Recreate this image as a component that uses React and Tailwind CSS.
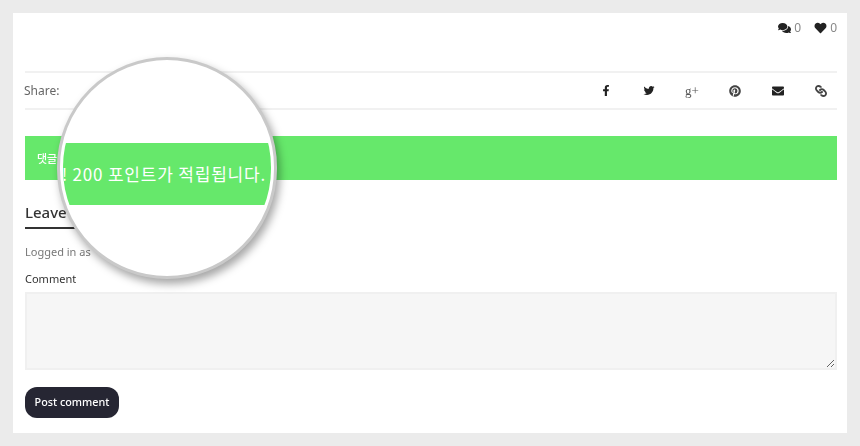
import { FaComments, FaHeart, FaFacebookF, FaTwitter, FaPinterest, FaEnvelope, FaLink } from "react-icons/fa";

const kr = { fontFamily: '"Noto Sans CJK KR", "Noto Sans", sans-serif' };

export default function App() {
  return (
    <div className="relative w-[860px] h-[446px] bg-[#ebebeb] overflow-hidden p-[13px]" style={{ fontFamily: '"Noto Sans", sans-serif' }}>
      <div className="w-[834px] h-[420px] bg-white pl-3 pr-[10px] flex flex-col blur-[0.4px]">
        <div className="h-[58px] flex justify-end items-start pt-[7px] text-[12px] leading-[15px] text-[#888]">
          <div className="flex items-center gap-[3px] mr-[13px]">
            <FaComments className="w-[13px] h-3 text-[#222]" />
            <span>0</span>
          </div>
          <div className="flex items-center gap-[3px]">
            <FaHeart className="w-[13px] h-3 text-[#222]" />
            <span>0</span>
          </div>
        </div>
        <div className="h-[39px] border-t-2 border-b-2 border-[#f1f1f1] flex items-center justify-between box-border">
          <span className="text-[12px] text-[#666] -ml-px">Share:</span>
          <div className="flex items-center gap-[29px] pr-[9px] text-[#222]">
            <FaFacebookF className="w-[14px] h-[11px]" />
            <FaTwitter className="w-[14px] h-[11px]" />
            <span className="w-[14px] h-[14px] flex items-center justify-center text-[13px] leading-[14px] text-[#555]" style={{ fontFamily: '"Liberation Serif", serif' }}>g+</span>
            <FaPinterest className="w-[14px] h-3 text-[#444]" />
            <FaEnvelope className="w-[14px] h-3" />
            <FaLink className="w-[14px] h-3 text-[#444] rotate-90" />
          </div>
        </div>
        <div className="mt-[26px] h-11 bg-[#66e86b] flex items-center pl-3 text-[11px] font-medium text-white" style={kr}>
          댓글
        </div>
        <div className="mt-[21px] self-start text-[15px] leading-[22px] font-medium text-[#333] pb-[4px] pr-7 border-b-2 border-[#333]">
          Leave
        </div>
        <div className="mt-[15px] text-[11px] leading-4 text-[#777]">Logged in as</div>
        <div className="mt-[11px] text-[11px] leading-4 text-[#333]">Comment</div>
        <textarea
          readOnly
          className="mt-[5px] w-full h-[78px] block bg-[#f6f6f6] border-2 border-[#f0f0f0] outline-none"
        />
        <button className="mt-[17px] self-start w-[94px] h-[31px] rounded-[12px] bg-[#262633] text-white text-[10.8px] font-medium">
          Post comment
        </button>
      </div>

      <div className="absolute left-[57px] top-[57px] w-[220px] h-[222px] rounded-full bg-white border-[3px] border-[#c9c9c9] shadow-[3px_5px_9px_rgba(0,0,0,0.35)] overflow-hidden">
        <div className="absolute inset-[1px] rounded-full border-2 border-white overflow-hidden">
          <div className="mt-[80px] h-[62px] bg-[#66e86b] flex items-center justify-end pr-[5px] text-[17px] tracking-[0.8px] text-white whitespace-nowrap" style={kr}>
            ! 200 포인트가 적립됩니다.
          </div>
        </div>
      </div>
    </div>
  );
}
